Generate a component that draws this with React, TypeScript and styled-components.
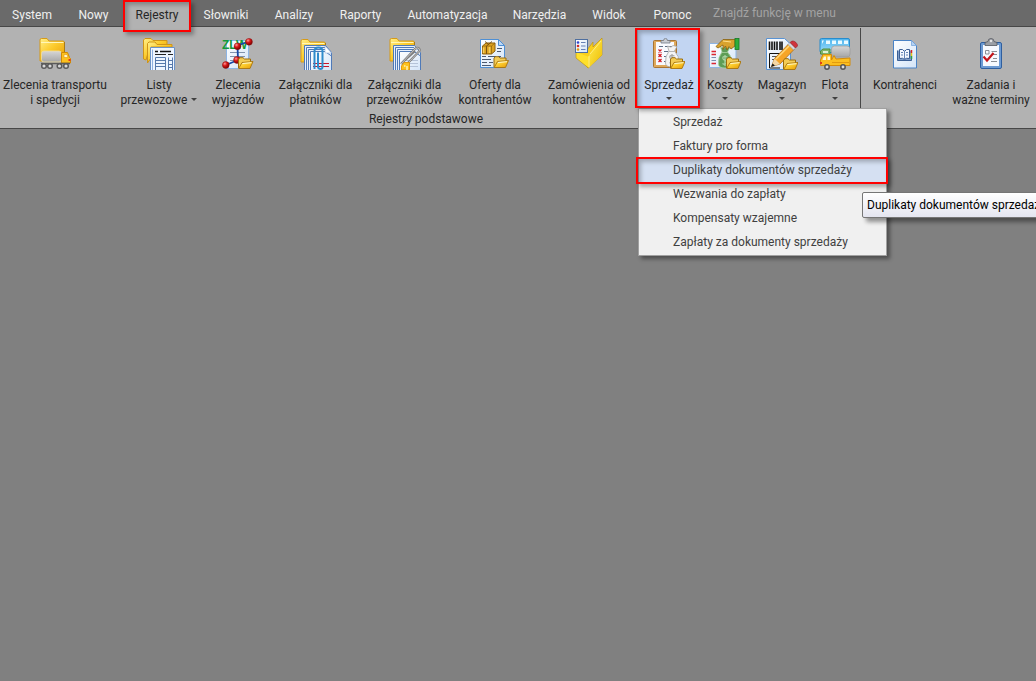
import React from "react";
import styled, { createGlobalStyle, css } from "styled-components";

const GlobalStyle = createGlobalStyle`
  * { box-sizing: border-box; }
  html, body { height: 100%; }
  body {
    margin: 0;
    background: #808080;
    overflow: hidden;
    font: 12px/15px Roboto, "Open Sans", sans-serif;
    color: #262626;
  }
  button, input { font: inherit; color: inherit; }
`;

const TabBar = styled.nav`
  display: flex;
  height: 27px;
  background: #6a6a6a;
  border-bottom: 1px solid #474747;
`;

const Tab = styled.button<{ $width: number; $active?: boolean }>`
  position: relative;
  flex: none;
  width: ${(p) => p.$width}px;
  height: ${(p) => (p.$active ? 27 : 26)}px;
  padding: ${(p) => (p.$active ? "3px 0 0" : "4px 0 0")};
  border: 0;
  background: ${(p) => (p.$active ? "#b2b2b2" : "transparent")};
  color: ${(p) => (p.$active ? "#262626" : "#f0f0f0")};
  white-space: nowrap;
`;

const Search = styled.input`
  flex: 1;
  min-width: 0;
  height: 26px;
  padding: 0 0 0 8px;
  border: 0;
  outline: 0;
  background: transparent;
  &::placeholder { color: #a3a3a3; opacity: 1; }
`;

const Frame = styled.span<{ $inset: string }>`
  position: absolute;
  inset: ${(p) => p.$inset};
  border: 2px solid #f00;
  box-shadow: 3px 3px 4px rgba(0, 0, 0, 0.3), inset 3px 3px 4px rgba(0, 0, 0, 0.25);
  pointer-events: none;
  z-index: 3;
`;

const Ribbon = styled.div`
  display: flex;
  height: 102px;
  padding-top: 1px;
  background: #b2b2b2;
  border-bottom: 1px solid #474747;
`;

const Group = styled.section`
  flex: none;
  display: flex;
  flex-direction: column;
  & + & { padding-left: 4px; }
`;

const Commands = styled.div<{ $divided?: boolean }>`
  display: flex;
  height: 80px;
  ${(p) =>
    p.$divided &&
    css`
      padding-right: 4px;
      margin-left: -4px;
      border-right: 1px solid #474747;
    `}
`;

const GroupTitle = styled.h2`
  margin: 4px 0 0;
  padding-right: 9px;
  font-size: 12px;
  line-height: 15px;
  font-weight: 400;
  text-align: center;
`;

const CommandSlot = styled.div`
  position: relative;
`;

const Command = styled.button<{ $width: number; $open?: boolean }>`
  display: flex;
  flex-direction: column;
  align-items: center;
  width: ${(p) => p.$width}px;
  height: 80px;
  padding: 10px 0 0;
  border: 0;
  background: ${(p) => (p.$open ? "#c2d5f2" : "transparent")};
  white-space: nowrap;
  svg.art { display: block; flex: none; margin-bottom: 8px; }
`;

const Label = styled.span`
  display: block;
`;

const Arrow = styled.i<{ $inline?: boolean }>`
  display: inline-block;
  border: 3px solid transparent;
  border-top-color: #404040;
  border-bottom: 0;
  ${(p) => (p.$inline ? "margin-left: 4px; vertical-align: 3px;" : "margin-top: 4px;")}
`;

const Menu = styled.ul`
  position: absolute;
  top: 80px;
  left: 0;
  width: 249px;
  margin: 0;
  padding: 1px 0;
  list-style: none;
  background: #f0f0f0;
  border: 1px solid #a0a0a0;
  box-shadow: 3px 3px 4px rgba(0, 0, 0, 0.4);
  z-index: 2;
`;

const MenuItem = styled.li`
  position: relative;
`;

const MenuButton = styled.button<{ $active?: boolean }>`
  display: block;
  width: 100%;
  height: 24px;
  padding: 0 0 0 34px;
  border: 0;
  text-align: left;
  color: #404040;
  background: ${(p) => (p.$active ? "#d5e0f2" : "transparent")};
`;

const Tooltip = styled.span`
  position: absolute;
  top: 34px;
  left: 223px;
  height: 26px;
  padding: 5px 4px 4px;
  line-height: 15px;
  white-space: nowrap;
  color: #000;
  background: linear-gradient(#fff, #e4e5f0);
  border: 1px solid #767676;
  border-radius: 2px;
  box-shadow: 4px 4px 4px rgba(0, 0, 0, 0.4);
  z-index: 4;
`;

/* ---------- artwork ---------- */

const Art = ({ children }: { children: React.ReactNode }) => (
  <svg className="art" width="32" height="32" viewBox="0 0 32 32" aria-hidden="true">
    {children}
  </svg>
);

const Gradients = () => (
  <svg width="0" height="0" style={{ position: "absolute" }} aria-hidden="true">
    <defs>
      <linearGradient id="gold" x1="0" y1="0" x2="1" y2="1">
        <stop offset="0" stopColor="#fff08a" />
        <stop offset=".45" stopColor="#fccb2c" />
        <stop offset="1" stopColor="#e59a08" />
      </linearGradient>
      <linearGradient id="lemon" x1="0" y1="0" x2="1" y2="1">
        <stop offset="0" stopColor="#ffee55" />
        <stop offset="1" stopColor="#eebb00" />
      </linearGradient>
      <linearGradient id="sheet" x1="0" y1="0" x2="1" y2="1">
        <stop offset="0" stopColor="#fff" />
        <stop offset="1" stopColor="#d3e4f8" />
      </linearGradient>
      <linearGradient id="steel" x1="0" y1="0" x2="0" y2="1">
        <stop offset="0" stopColor="#d6d6d6" />
        <stop offset="1" stopColor="#a6a6a6" />
      </linearGradient>
      <linearGradient id="sky" x1="0" y1="0" x2="0" y2="1">
        <stop offset="0" stopColor="#4db4ee" />
        <stop offset="1" stopColor="#9bdcfa" />
      </linearGradient>
      <radialGradient id="ball" cx=".35" cy=".3" r=".7">
        <stop offset="0" stopColor="#ff9a9a" />
        <stop offset=".45" stopColor="#d81818" />
        <stop offset="1" stopColor="#7d0000" />
      </radialGradient>
    </defs>
  </svg>
);

const Folder = () => (
  <g>
    <path d="M1 23V2Q1 .5 2.500 .5H8L10 3H24Q25.500 3 25.500 5V23Z" fill="url(#gold)" stroke="#d69a18" />
    <path d="M2 4.500H24.500" stroke="#fff6b8" />
    <path d="M25.500 4V21" stroke="#8c6714" opacity=".6" />
  </g>
);

const OpenFolder = ({ x = 17, y = 19 }: { x?: number; y?: number }) => (
  <g transform={`translate(${x} ${y})`}>
    <path d="M.5 11V2L2 .7H5L6.500 2H12.500V5" fill="#f3cc55" stroke="#9a6c0c" />
    <path d="M.7 11.500L4 5.500L15 4.500L12 11.500Z" fill="url(#gold)" stroke="#a8740c" strokeWidth=".9" />
    <path d="M4.500 6.500L13.500 5.700" stroke="#fffad0" />
  </g>
);

const IconTruck = () => (
  <Art>
    <Folder />
    <rect x="2.500" y="13" width="20" height="11" rx="2.500" fill="url(#steel)" stroke="#f3df9c" strokeWidth=".8" />
    <path d="M22.500 25V14.500H28.500L30.500 19.500L31.500 20.500V25Z" fill="#fcc11e" stroke="#d08a06" />
    <path d="M25 19.500V16.500H28L29 19.500Z" fill="#fff6ce" stroke="#e49a0a" strokeWidth=".6" />
    <rect x="29.500" y="21" width="2" height="2" fill="#e8321c" />
    <path d="M2 25.500H31" stroke="#5b5b5b" strokeWidth="1.500" />
    {[5, 11, 20.5, 27].map((cx) => (
      <circle key={cx} cx={cx} cy="28" r="2.300" fill="#d8d8d8" stroke="#5a5a5a" strokeWidth="1.500" />
    ))}
  </Art>
);

const IconWaybills = () => (
  <Art>
    <path d="M.5 21V2L2 .5H8L10 2.500H24V8H7L3 22Z" fill="url(#gold)" stroke="#cf9518" />
    <path d="M4.500 25V5.500L6 4H12L14 6.500H29V9H8V20Z" fill="url(#gold)" stroke="#cf9518" />
    <path d="M7.500 32V9.500H31.500V32" fill="#eef5ff" stroke="#6c93c8" />
    <path d="M9.500 32V11.500" stroke="#8fb0df" />
    <path d="M12 13.500H15M17 13.500H28" stroke="#111" strokeWidth="1.500" />
    <path d="M12 16.500H23M25 16.500H30" stroke="#222" />
    <path d="M12.500 19.500H22.500V32M12.500 19.500V32M25.500 19.500V32M29.500 19.500V32M12.500 22.500H22.500M12.500 25.500H22.500M12.500 28.500H22.500M25.500 22.500H30M25.500 26.500H30M25.500 29.500H30" stroke="#5679ab" fill="none" />
  </Art>
);

const IconTrips = () => (
  <Art>
    <rect x="4.500" y="2.500" width="22" height="28" fill="url(#sheet)" stroke="#8db4e3" />
    <path d="M8 14.500H23M8 18.500H23M8 22.500H20" stroke="#8193ad" />
    <text x="0" y="11" fontFamily="Liberation Sans, sans-serif" fontSize="12" fontWeight="700" fill="#149a38">ZLW</text>
    <path d="M27 3.500L15.500 7.500L16 22L4 27" fill="none" stroke="#1748a6" strokeWidth="1.800" />
    {[[27, 3.8], [15.5, 8.3], [15, 22], [3.8, 27]].map(([cx, cy]) => (
      <circle key={cy} cx={cx} cy={cy} r="3.400" fill="url(#ball)" stroke="#8f1010" strokeWidth=".5" />
    ))}
    <OpenFolder x={16} y={19} />
  </Art>
);

const PageStack = () => (
  <g fill="#e6effb" stroke="#4f7ab8">
    <path d="M4.500 32V7.500H25.500L31.500 14.500V32" />
    <path d="M6.500 32V9.500H25" />
    <path d="M8.500 32V11.500H26" />
    <path d="M10.500 32V13.500H25L31.500 18V32" fill="url(#sheet)" />
  </g>
);

const IconPayers = () => (
  <Art>
    <g transform="translate(0 1)"><Folder /></g>
    <PageStack />
    <path d="M25 8L31.500 15H25Z" fill="#fff" stroke="#9ab6dd" strokeWidth=".6" />
    <path d="M13 25.500H29M13 28.500H29" stroke="#c9152b" strokeWidth="1.200" />
    <path d="M14.500 31V13Q14.500 9.500 18.500 9.500T22.500 13V29Q22.500 31 20.500 31T18 29V14.500" fill="none" stroke="#2f8bcb" strokeWidth="2" />
  </Art>
);

const IconCarriers = () => (
  <Art>
    <Folder />
    <PageStack />
    <path d="M14 22.500H29M14 25.500H29M14 28.500H29" stroke="#b5c3d8" />
    <path d="M12 26L26 11Q28.500 9 30 10.500T29.500 14L17.500 26.500M14.500 23.500L26 13" fill="none" stroke="#7c7c7c" strokeWidth="2.300" />
    <path d="M12 26L26 11Q28.500 9 30 10.500T29.500 14L17.500 26.500" fill="none" stroke="#d4d4d4" strokeWidth=".8" />
    <path d="M12.500 32V28L15 24.500H20.500V32Z" fill="#fcc11e" stroke="#e39b0c" />
    <path d="M15 28H16.500M18 28V32" stroke="#fff1b0" strokeWidth="1.500" />
  </Art>
);

const IconOffers = () => (
  <Art>
    <path d="M1.500 1.500H19.500L25.500 7.500V29.500H1.500Z" fill="url(#sheet)" stroke="#4e8fd4" />
    <path d="M19.500 1.500V7.500H25.500Z" fill="#bdd8f6" stroke="#4e8fd4" />
    <path d="M3.500 8L7 5H16V13L12.500 16H3.500Z" fill="#dda321" stroke="#8f610c" />
    <path d="M3.500 8H12.500L16 5M12.500 8V16" stroke="#8f610c" fill="none" strokeWidth=".7" />
    <path d="M4.500 9.500V15M10.500 9V15" stroke="#f6cf63" strokeWidth="1.500" />
    <path d="M7.500 8V16M7.500 8L11 5M9.500 6.500L6 3.500M9.500 6.500L13 3.500" stroke="#7b5310" strokeWidth="1" />
    <path d="M18 10.500H23M18 13.500H22M3 18.500H7M9 18.500H17M19 18.500H22M3 21.500H12M3 24.500H8M10 24.500H14M3 27.500H12" stroke="#4c5a70" />
    <OpenFolder x={14.5} y={18} />
  </Art>
);

const IconOrders = () => (
  <Art>
    <path d="M3 14L15 30L29 17V0L20 9V4L14 12Z" fill="#f9cf1c" stroke="#b98d0a" strokeWidth=".6" />
    <path d="M3 14L16 19L15.500 30L3 20Z" fill="#ffe02c" />
    <path d="M3 14V20L15.500 30" fill="none" stroke="#b98d0a" strokeWidth=".6" />
    <path d="M16 17L29 1V17L15.500 30Z" fill="url(#lemon)" />
    <path d="M16 18V29M17 16L28 3" stroke="#fff29a" strokeWidth=".8" />
    <rect x="2.500" y="1.500" width="12" height="13" fill="url(#sheet)" stroke="#4f6f9f" />
    <circle cx="5" cy="4.500" r="1.300" fill="#3244cf" />
    <circle cx="5" cy="8" r="1.300" fill="#cf2b2b" />
    <circle cx="5" cy="11.500" r="1.300" fill="#e39a12" />
    <path d="M8 4.500H12.500M8 8H12.500M8 11.500H12.500" stroke="#6681b5" />
  </Art>
);

const Sack = ({ x, y, fill, line }: { x: number; y: number; fill: string; line: string }) => (
  <g transform={`translate(${x} ${y})`} stroke={line} fill={fill} strokeWidth=".8">
    <path d="M4 6L2.500 1L6 2.200L8 .5L12 1.500L9.500 6Q14.500 11 14 18Q13.500 22 7 22T.5 18Q0 11 4 6Z" />
    <path d="M4 6.500H9.500" />
    <path d="M9.500 11Q4.500 9.500 4.800 12.300Q5 14 7.500 14.500Q10 15.500 8.500 17.500Q6.500 19 4.500 17.500M7 9V20" fill="none" strokeWidth="1.300" />
  </g>
);

const IconSales = () => (
  <Art>
    <rect x=".5" y="2.500" width="23" height="27" rx="1" fill="#dfa95c" stroke="#a87434" />
    <path d="M3 4H21V27H3Z" fill="#f8faff" />
    <path d="M8 5V2.500H10.500Q11 .3 12.500 .3T14.500 2.500H17V5Z" fill="#c9cdd4" stroke="#717985" strokeWidth=".8" />
    <path d="M6 8.500H10M12 8.500H19M11 13.500H15M11 18.500H14M11 23.500H14" stroke="#5d6e86" />
    {[13, 17.5, 22.5].map((y) => (
      <path key={y} d={`M5.500 ${y - 1.5}L8.500 ${y + 1.5}M8.500 ${y - 1.5}L5.500 ${y + 1.5}`} stroke="#d31720" strokeWidth="1.200" />
    ))}
    <Sack x={12} y={7} fill="#f4f4f4" line="#a6a6a6" />
    <OpenFolder />
  </Art>
);

const IconCosts = () => (
  <Art>
    <path d="M.5 5.500H27V29.500H.5Z" fill="url(#sheet)" stroke="#8db4e3" />
    <path d="M2.500 13.500H7M2.500 16.500H7M2.500 25.500H7" stroke="#dc2732" strokeWidth="1.300" />
    <path d="M2.500 19.500H7M2.500 22.500H7" stroke="#7b8fae" />
    <Sack x={9} y={8} fill="#5d9d55" line="#a9d2a0" />
    <path d="M26 1.500H14L7 8.500L9 10L14 7V11.500L16.500 8L18 12L20 8.500L22 11L26 8Z" fill="#d9a22d" stroke="#87600f" strokeWidth=".8" />
    <path d="M14 3L22 4" stroke="#ffdf8a" />
    <rect x="26" y=".5" width="4" height="11" fill="#2fad3c" stroke="#167a23" strokeWidth=".8" />
    <OpenFolder />
  </Art>
);

const IconWarehouse = () => (
  <Art>
    <path d="M.5 .5H18.500L24.500 6V31.500H.5Z" fill="url(#sheet)" stroke="#5a93d3" />
    <path d="M3.500 3.500V12M6 3.500V12M8.500 3.500V12M11 3.500V12M14 3.500V12M16 3.500V12" stroke="#111" strokeWidth="1.600" />
    <path d="M3.500 30V15.500H18M3.500 30H14" stroke="#111" fill="none" />
    <path d="M6 18.500H12M6 21.500H10" stroke="#555" />
    <path d="M5.500 28.500L8.500 20.500L22.500 6L28 11.500L14 26Z" fill="#f7a526" stroke="#a8660c" strokeWidth=".7" />
    <path d="M10 21L24 7" stroke="#ffd87a" strokeWidth="1.500" />
    <path d="M5.500 28.500L8.500 20.500L14 26Z" fill="#f4d7a6" />
    <path d="M5 29L6.500 25.500L9 27.500Z" fill="#171717" />
    <path d="M22 6.500L24 4.500L29.500 10L27.500 12Z" fill="#d5d8df" stroke="#808692" strokeWidth=".5" />
    <path d="M24 4.500L26 3Q28 2.500 30 4.500T31.500 8L29.500 10Z" fill="#cf333d" stroke="#8d151e" strokeWidth=".5" />
    <OpenFolder x={17} y={20} />
  </Art>
);

const IconFleet = () => (
  <Art>
    <rect x="1" y=".5" width="29.500" height="14" rx="1.500" fill="url(#sky)" stroke="#288ccc" />
    <path d="M3 6V2.500H5M7 2.500H11V6H7ZM13 2.500H17V6H13ZM19 2.500H23V6H19ZM25 2.500H29V6H25Z" fill="#e9faff" />
    <path d="M1.500 16V13L4 11H11V17Z" fill="#80b66c" stroke="#4f8b3d" />
    <path d="M4 15V13H9V15Z" fill="#ddf1d4" />
    <rect x="12.500" y="8" width="18.500" height="11" rx="3" fill="url(#steel)" stroke="#999" strokeWidth=".7" />
    <path d="M1.500 27.500V22L4 16.500H12.500V22L15 17.500L17 21L31 20V27.500Z" fill="#fcbf20" stroke="#d38b09" />
    <path d="M3.500 21.500L5 18.500H7V22H4ZM8.500 18.500H11V22H8.500Z" fill="#fff7dc" />
    <path d="M13 24.500H30" stroke="#e29a10" />
    <rect x="1" y="24" width="2" height="2" fill="#e23b1c" />
    {[8, 24].map((cx) => (
      <circle key={cx} cx={cx} cy="29" r="2.200" fill="#ddd" stroke="#555" strokeWidth="1.500" />
    ))}
  </Art>
);

const IconContractors = () => (
  <Art>
    <path d="M4.500 2.500H22.500L27.500 7.500V30H4.500Z" fill="url(#sheet)" stroke="#4a83c6" />
    <path d="M22.500 2.500V7.500H27.500Z" fill="#b5d2f3" stroke="#6c9fd8" strokeWidth=".7" />
    <path d="M8.500 12.500V22.500H22.500V12.500" fill="#7f9cc6" stroke="#3b5f95" />
    <path d="M10.500 11.500Q14 10.500 15.500 13.500Q17 10.500 20.500 11.500V20.500Q17 19.500 15.500 21.500Q14 19.500 10.500 20.500Z" fill="#f4f8ff" stroke="#3b5f95" />
    <path d="M15.500 13V21.500M12 14.500H14M12 17H14M17 14.500H19M17 17H19" stroke="#6484b4" />
    <path d="M22.500 12V15" stroke="#d92626" strokeWidth="1.500" />
    <path d="M22.500 15V18" stroke="#e6c61a" strokeWidth="1.500" />
    <path d="M22.500 18V21" stroke="#2c9c4b" strokeWidth="1.500" />
  </Art>
);

const IconTasks = () => (
  <Art>
    <rect x="5.500" y="4.500" width="21" height="26" rx="1.500" fill="#6d9bd3" stroke="#2f5f9f" />
    <path d="M8 7H24V28H8Z" fill="#f7faff" />
    <path d="M10 7.500V4.500L13 3.500Q13 .5 16 .5T19 3.500L22 4.500V7.500Z" fill="#9b9fa5" stroke="#55595f" strokeWidth=".8" />
    <circle cx="16" cy="3" r="1.200" fill="#e7e7e7" />
    <path d="M10.500 12.500H14V16H10.500ZM16.500 13.500H22M16.500 16.500H22M18 20.500H22M16 23.500H22" stroke="#8a8f96" fill="none" />
    <path d="M8.500 18.500L12 22.500L18.500 15" stroke="#c4161c" strokeWidth="2.200" fill="none" />
  </Art>
);

/* ---------- data ---------- */

const tabs = [
  { name: "System", width: 64 },
  { name: "Nowy", width: 59 },
  { name: "Rejestry", width: 68, active: true },
  { name: "Słowniki", width: 70 },
  { name: "Analizy", width: 66 },
  { name: "Raporty", width: 67 },
  { name: "Automatyzacja", width: 107 },
  { name: "Narzędzia", width: 77 },
  { name: "Widok", width: 62 },
  { name: "Pomoc", width: 65 },
];

type CommandData = {
  icon: React.ReactNode;
  lines: string[];
  width: number;
  arrow?: "inline" | "below";
  open?: boolean;
};

const mainCommands: CommandData[] = [
  { icon: <IconTruck />, lines: ["Zlecenia transportu", "i spedycji"], width: 118 },
  { icon: <IconWaybills />, lines: ["Listy", "przewozowe"], width: 90, arrow: "inline" },
  { icon: <IconTrips />, lines: ["Zlecenia", "wyjazdów"], width: 68 },
  { icon: <IconPayers />, lines: ["Załączniki dla", "płatników"], width: 87 },
  { icon: <IconCarriers />, lines: ["Załączniki dla", "przewoźników"], width: 91 },
  { icon: <IconOffers />, lines: ["Oferty dla", "kontrahentów"], width: 90 },
  { icon: <IconOrders />, lines: ["Zamówienia od", "kontrahentów"], width: 98 },
  { icon: <IconSales />, lines: ["Sprzedaż"], width: 62, arrow: "below", open: true },
  { icon: <IconCosts />, lines: ["Koszty"], width: 50, arrow: "below" },
  { icon: <IconWarehouse />, lines: ["Magazyn"], width: 64, arrow: "below" },
  { icon: <IconFleet />, lines: ["Flota"], width: 42, arrow: "below" },
];

const sideCommands: CommandData[] = [
  { icon: <IconContractors />, lines: ["Kontrahenci"], width: 80 },
  { icon: <IconTasks />, lines: ["Zadania i", "ważne terminy"], width: 92 },
];

const menuEntries = [
  "Sprzedaż",
  "Faktury pro forma",
  "Duplikaty dokumentów sprzedaży",
  "Wezwania do zapłaty",
  "Kompensaty wzajemne",
  "Zapłaty za dokumenty sprzedaży",
];

const SalesMenu = () => (
  <Menu>
    {menuEntries.map((entry, i) => (
      <MenuItem key={entry}>
        <MenuButton $active={i === 2}>{entry}</MenuButton>
        {i === 2 && (
          <>
            <Frame $inset="-1px -2px -2px -3px" />
            <Tooltip role="tooltip">{entry}</Tooltip>
          </>
        )}
      </MenuItem>
    ))}
  </Menu>
);

const CommandButton = ({ icon, lines, width, arrow, open }: CommandData) => (
  <CommandSlot>
    <Command $width={width} $open={open}>
      {icon}
      {lines.map((line, i) => (
        <Label key={line}>
          {line}
          {arrow === "inline" && i === lines.length - 1 && <Arrow $inline />}
        </Label>
      ))}
      {arrow === "below" && <Arrow />}
    </Command>
    {open && (
      <>
        <Frame $inset="0 0 0 -3px" />
        <SalesMenu />
      </>
    )}
  </CommandSlot>
);

export default function App() {
  return (
    <>
      <GlobalStyle />
      <Gradients />
      <TabBar>
        {tabs.map((tab) => (
          <Tab key={tab.name} $width={tab.width} $active={tab.active}>
            {tab.name}
            {tab.active && <Frame $inset="0 0 -5px 0" />}
          </Tab>
        ))}
        <Search type="search" placeholder="Znajdź funkcję w menu" aria-label="Znajdź funkcję w menu" />
      </TabBar>
      <Ribbon>
        <Group>
          <Commands $divided>
            {mainCommands.map((c) => (
              <CommandButton key={c.lines.join(" ")} {...c} />
            ))}
          </Commands>
          <GroupTitle>Rejestry podstawowe</GroupTitle>
        </Group>
        <Group>
          <Commands>
            {sideCommands.map((c) => (
              <CommandButton key={c.lines.join(" ")} {...c} />
            ))}
          </Commands>
        </Group>
      </Ribbon>
    </>
  );
}
